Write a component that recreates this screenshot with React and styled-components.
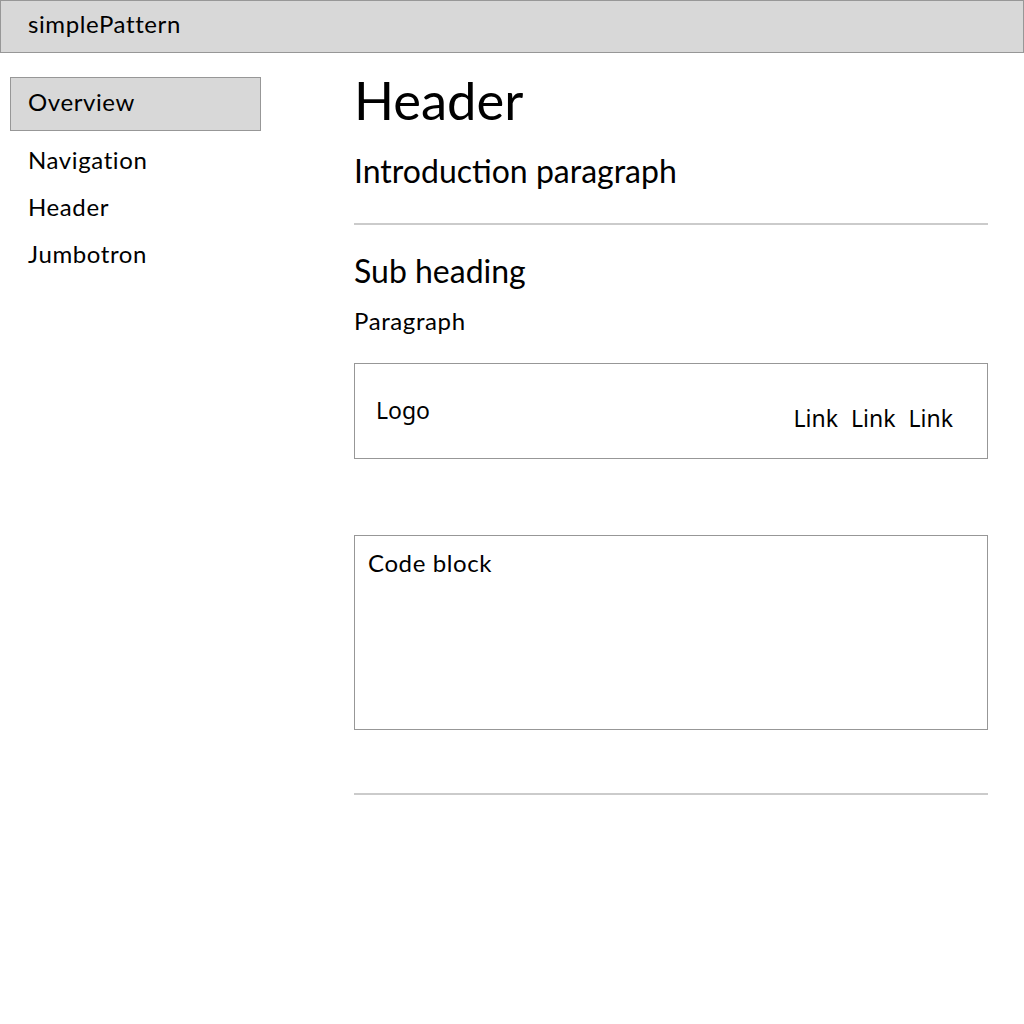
import styled, { createGlobalStyle } from "styled-components";

const GlobalStyle = createGlobalStyle`
  html, body {
    margin: 0;
    padding: 0;
    background: #ffffff;
  }
  body {
    font-family: "Lato", "Noto Sans", sans-serif;
    color: #000000;
  }
  * {
    box-sizing: border-box;
  }
`;

const Page = styled.div`
  width: 1024px;
  min-height: 1024px;
`;

const TopBar = styled.div`
  height: 53px;
  padding: 9px 27px 0;
  background: #d8d8d8;
  border: 1px solid #979797;
  font-size: 24px;
  letter-spacing: 0.6px;
  line-height: 1.2;
`;

const Body = styled.div`
  display: flex;
`;

const Sidebar = styled.nav`
  width: 354px;
  flex-shrink: 0;
  padding: 24px 0 0 10px;
`;

const NavActive = styled.div`
  width: 251px;
  height: 54px;
  padding: 10px 17px 0;
  background: #d8d8d8;
  border: 1px solid #979797;
  font-size: 24px;
  letter-spacing: 0.6px;
  line-height: 1.2;
`;

const NavList = styled.ul`
  list-style: none;
  margin: 5px 0 0;
  padding: 0;
`;

const NavItem = styled.li`
  padding-left: 18px;
  font-size: 24px;
  letter-spacing: 0.6px;
  line-height: 47px;
`;

const Main = styled.main`
  width: 634px;
  padding-top: 15px;
`;

const Title = styled.h1`
  margin: 0;
  font-size: 52.5px;
  font-weight: 400;
  line-height: 1.2;
`;

const Intro = styled.p`
  margin: 21px 0 0;
  font-size: 32px;
  line-height: 1.2;
`;

const Rule = styled.hr`
  margin: ${(props) => props.$top}px 0 0;
  height: 2px;
  border: 0;
  background: #cbcbcb;
`;

const SubHeading = styled.h2`
  margin: 27px 0 0;
  font-size: 32px;
  font-weight: 400;
  line-height: 1.2;
`;

const Paragraph = styled.p`
  margin: 16px 0 0;
  font-size: 24px;
  letter-spacing: 0.6px;
  line-height: 1.2;
`;

const NavPreview = styled.div`
  margin-top: 27px;
  height: 96px;
  padding: 0 34px 0 21px;
  border: 1px solid #979797;
  display: flex;
  justify-content: space-between;
  align-items: flex-start;
  font-family: "Noto Sans", "Open Sans", sans-serif;
  font-size: 23px;
  line-height: 1.2;
`;

const PreviewLogo = styled.span`
  margin-top: 33px;
`;

const PreviewLinks = styled.div`
  margin-top: 41px;
  display: flex;
  gap: 13px;
`;

const CodeBlock = styled.pre`
  margin: 76px 0 0;
  height: 195px;
  padding: 13px 13px;
  border: 1px solid #979797;
  font-family: "Lato", "Noto Sans", sans-serif;
  font-size: 24px;
  letter-spacing: 0.6px;
  line-height: 1.2;
`;

const navItems = ["Navigation", "Header", "Jumbotron"];

export default function App() {
  return (
    <Page>
      <GlobalStyle />
      <TopBar>simplePattern</TopBar>
      <Body>
        <Sidebar>
          <NavActive>Overview</NavActive>
          <NavList>
            {navItems.map((item) => (
              <NavItem key={item}>{item}</NavItem>
            ))}
          </NavList>
        </Sidebar>
        <Main>
          <Title>Header</Title>
          <Intro>Introduction paragraph</Intro>
          <Rule $top={33} />
          <SubHeading>Sub heading</SubHeading>
          <Paragraph>Paragraph</Paragraph>
          <NavPreview>
            <PreviewLogo>Logo</PreviewLogo>
            <PreviewLinks>
              <span>Link</span>
              <span>Link</span>
              <span>Link</span>
            </PreviewLinks>
          </NavPreview>
          <CodeBlock>Code block</CodeBlock>
          <Rule $top={63} />
        </Main>
      </Body>
    </Page>
  );
}
